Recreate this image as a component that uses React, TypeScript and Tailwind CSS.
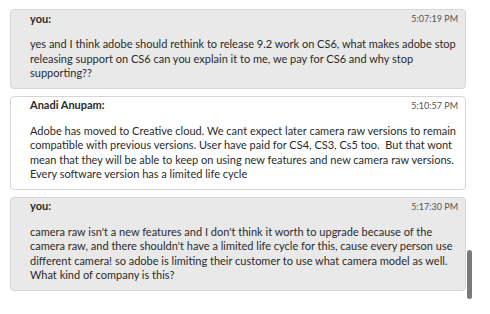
const messages = [
  {
    author: 'you:',
    time: '5:07:19 PM',
    mine: true,
    lines: [
      'yes and I think adobe should rethink to release 9.2 work on CS6, what makes adobe stop',
      'releasing support on CS6 can you explain it to me, we pay for CS6 and why stop',
      'supporting??',
    ],
  },
  {
    author: 'Anadi Anupam:',
    time: '5:10:57 PM',
    mine: false,
    lines: [
      'Adobe has moved to Creative cloud. We cant expect later camera raw versions to remain',
      'compatible with previous versions. User have paid for CS4, CS3, Cs5 too.  But that wont',
      'mean that they will be able to keep on using new features and new camera raw versions.',
      'Every software version has a limited life cycle',
    ],
  },
  {
    author: 'you:',
    time: '5:17:30 PM',
    mine: true,
    lines: [
      "camera raw isn't a new features and I don't think it worth to upgrade because of the",
      "camera raw, and there shouldn't have a limited life cycle for this, cause every person use",
      'different camera! so adobe is limiting their customer to use what camera model as well.',
      'What kind of company is this?',
    ],
  },
];

export default function App() {
  return (
    <div className="relative w-[490px] h-[314px] overflow-hidden bg-white font-['Lato',sans-serif] text-[#2b2b2b]">
      <div className="flex flex-col gap-[7px] pl-[10px] pr-[24px] pt-[9px]">
        {messages.map((m, i) => (
          <div
            key={i}
            className={`rounded-[4px] border border-[#d6d6d6] pl-[19px] pr-[7px] pt-[3px] pb-[7px] ${
              m.mine ? 'bg-[#e9e9e9]' : 'bg-white'
            }`}
          >
            <div className="flex items-center justify-between h-[12px]">
              <span className="text-[11px] font-bold">{m.author}</span>
              <span className="text-[9px] text-[#555]">{m.time}</span>
            </div>
            <p className="mt-[12px] text-[11px] leading-[14.5px] whitespace-pre">
              {m.lines.map((l, j) => (
                <span key={j} className="block">
                  {l}
                </span>
              ))}
            </p>
          </div>
        ))}
      </div>
      <div className="absolute left-[467px] top-[250px] w-[5px] h-[49px] rounded-[3px] bg-[#7a7a7a]" />
    </div>
  );
}
